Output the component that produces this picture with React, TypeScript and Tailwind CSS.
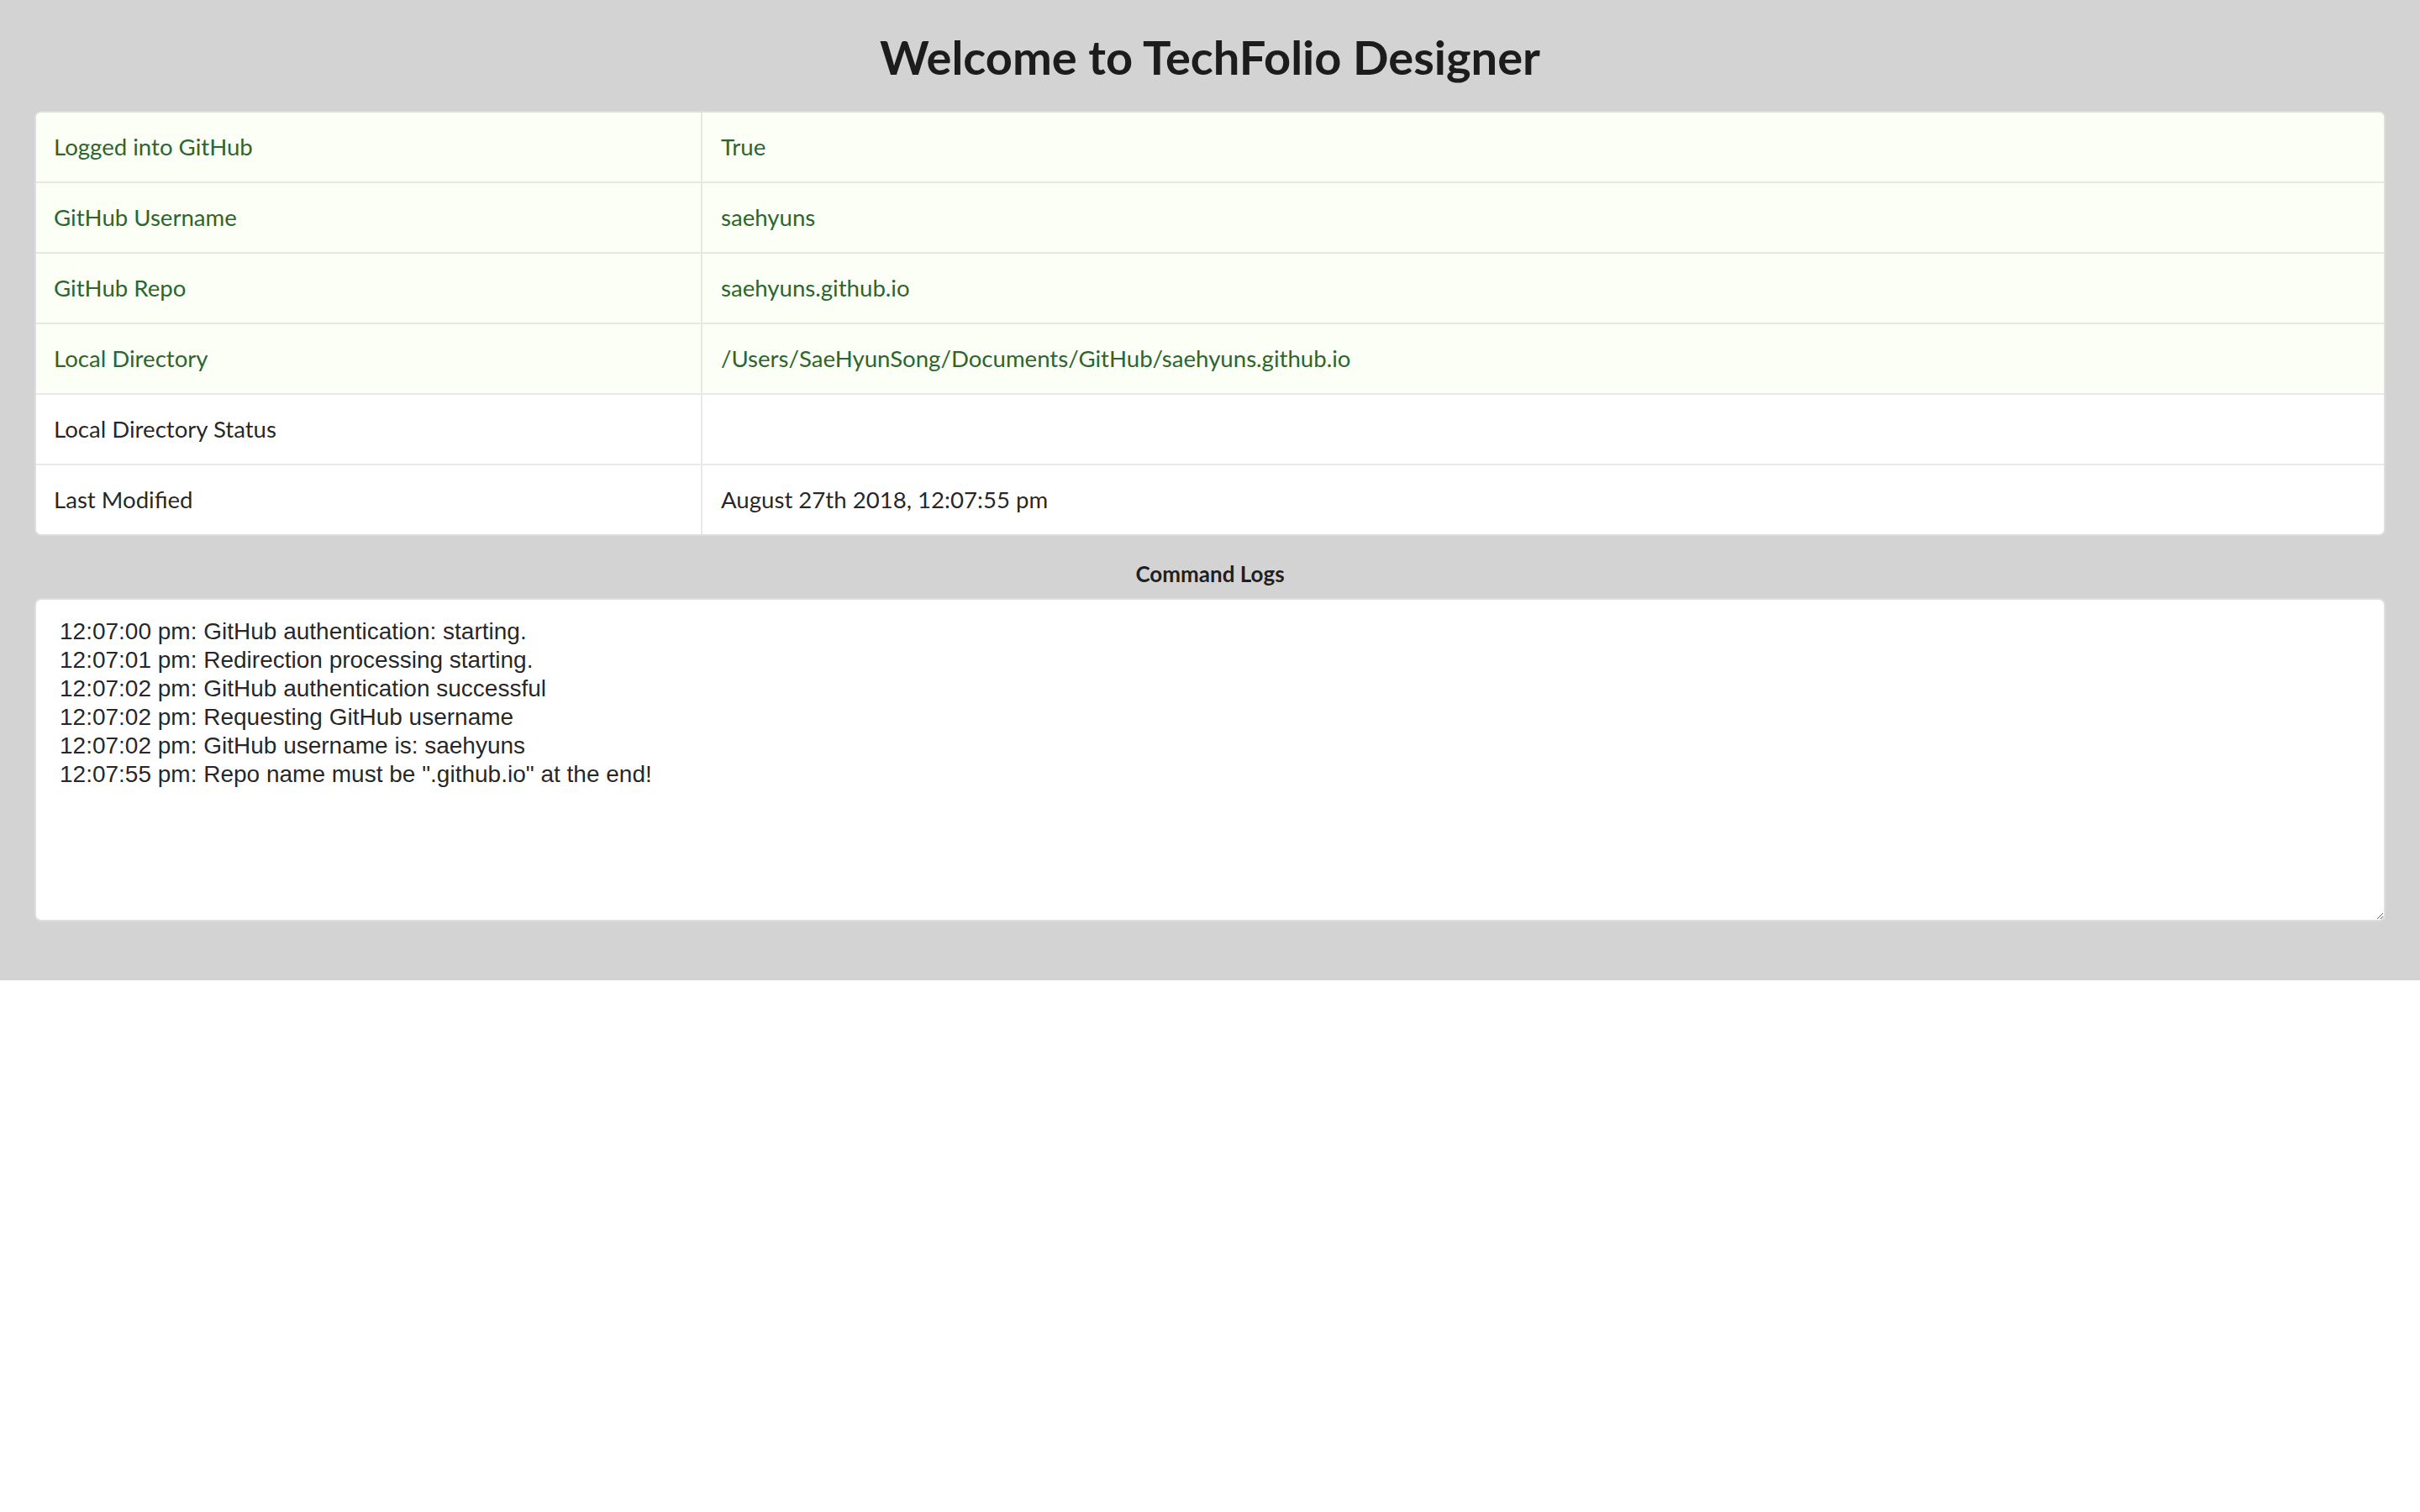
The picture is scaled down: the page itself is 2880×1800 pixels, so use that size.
import React from 'react';

interface InfoRow {
  label: string;
  value: string;
  positive: boolean;
}

const rows: InfoRow[] = [
  { label: 'Logged into GitHub', value: 'True', positive: true },
  { label: 'GitHub Username', value: 'saehyuns', positive: true },
  { label: 'GitHub Repo', value: 'saehyuns.github.io', positive: true },
  {
    label: 'Local Directory',
    value: '/Users/SaeHyunSong/Documents/GitHub/saehyuns.github.io',
    positive: true,
  },
  { label: 'Local Directory Status', value: '', positive: false },
  { label: 'Last Modified', value: 'August 27th 2018, 12:07:55 pm', positive: false },
];

const logs = [
  '12:07:00 pm: GitHub authentication: starting.',
  '12:07:01 pm: Redirection processing starting.',
  '12:07:02 pm: GitHub authentication successful',
  '12:07:02 pm: Requesting GitHub username',
  '12:07:02 pm: GitHub username is: saehyuns',
  '12:07:55 pm: Repo name must be ".github.io" at the end!',
].join('\n');

export default function App() {
  return (
    <div className="min-h-screen bg-white font-['Lato',_'Helvetica_Neue',_Arial,_sans-serif]">
      <div className="bg-[#d3d3d3] px-[41px] pt-[32px] pb-[70px]">
        <h1 className="mb-[28px] text-center text-[56px] leading-[72px] font-bold text-[rgba(0,0,0,0.87)]">
          Welcome to TechFolio Designer
        </h1>

        {/* Status table */}
        <div className="overflow-hidden rounded-[8px] border-2 border-[rgba(34,36,38,0.15)] bg-white text-[27.6px] leading-[40px]">
          {rows.map((row, i) => (
            <div
              key={row.label}
              className={`flex ${i > 0 ? 'border-t-2 border-[rgba(34,36,38,0.1)]' : ''} ${
                row.positive ? 'bg-[#fcfff5] text-[#2c662d]' : 'bg-white text-[rgba(0,0,0,0.87)]'
              }`}
            >
              <div className="w-[791px] shrink-0 px-[21px] py-[21px]">{row.label}</div>
              <div className="flex-1 border-l-2 border-[rgba(34,36,38,0.1)] px-[22px] py-[21px]">
                {row.value || '\u00a0'}
              </div>
            </div>
          ))}
        </div>

        {/* Command logs */}
        <div className="mt-[27px] mb-[11px] text-center text-[26px] leading-[36px] font-bold text-[rgba(0,0,0,0.87)]">
          Command Logs
        </div>
        <textarea
          readOnly
          defaultValue={logs}
          className="block h-[385px] w-full rounded-[8px] border-2 border-[rgba(34,36,38,0.15)] bg-white px-[28px] pt-[21px] font-['Liberation_Sans',_Arial,_sans-serif] text-[28px] leading-[34px] text-[rgba(0,0,0,0.87)] outline-none"
        />
      </div>
    </div>
  );
}
